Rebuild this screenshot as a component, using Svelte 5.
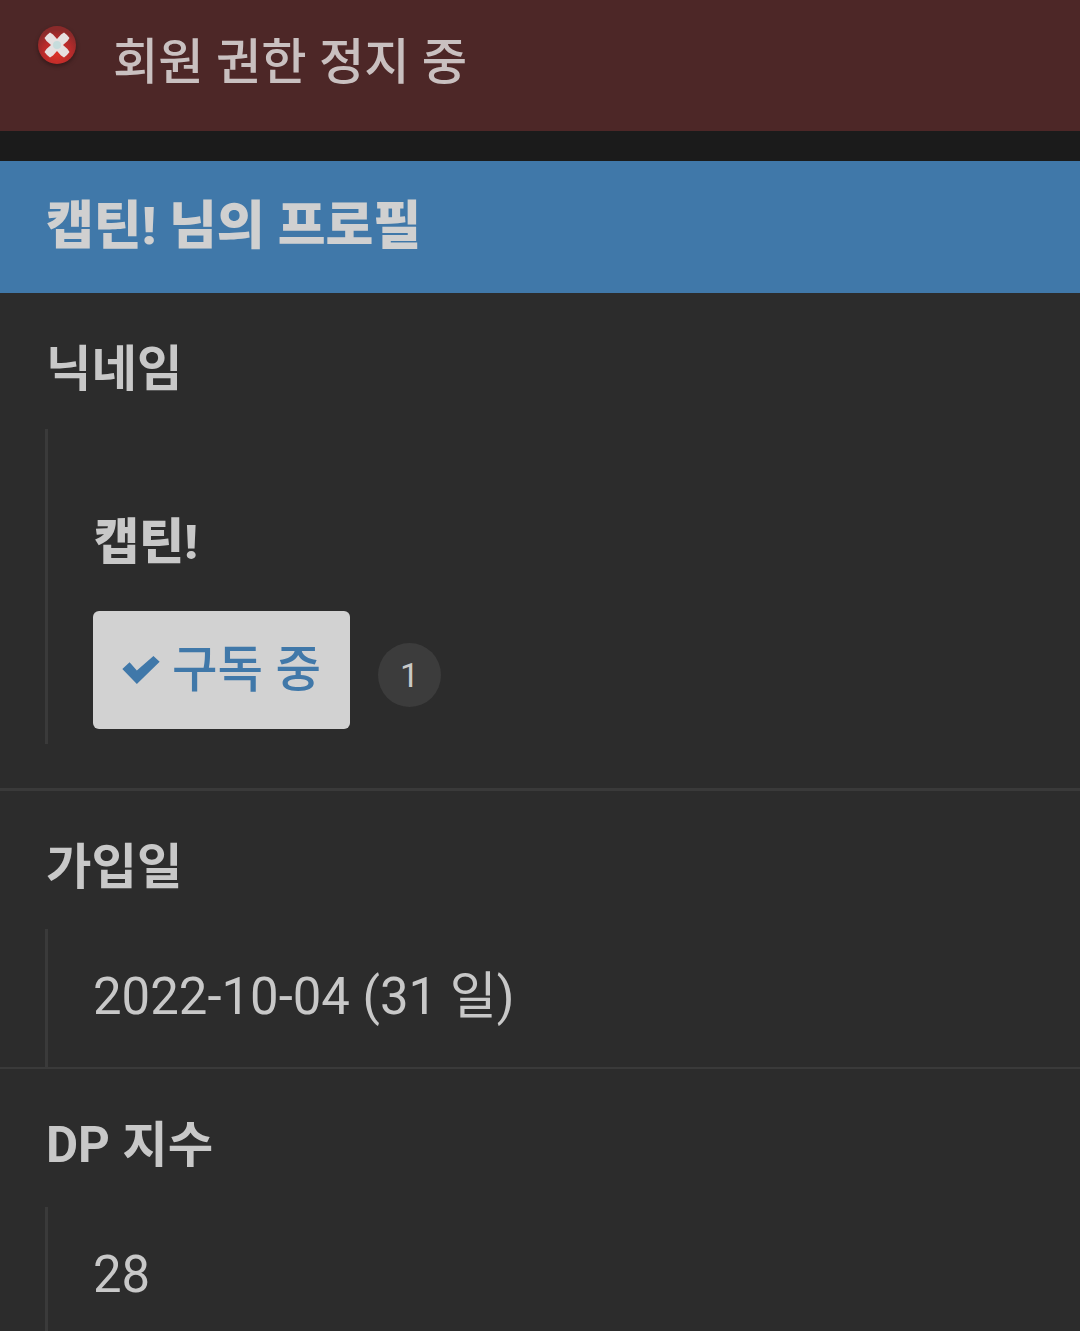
<script>
  const sections = [
    { title: '가입일', value: '2022-10-04 (31 일)' },
    { title: 'DP 지수', value: '28' }
  ];
</script>

<div class="page">
  <div class="banner">
    <svg class="err" viewBox="0 0 40 40" width="40" height="40" aria-hidden="true">
      <defs>
        <radialGradient id="ball" cx="50%" cy="72%" r="62%">
          <stop offset="0%" stop-color="#dc3228" />
          <stop offset="60%" stop-color="#b82b2b" />
          <stop offset="100%" stop-color="#8a2a2a" />
        </radialGradient>
      </defs>
      <circle cx="20" cy="20" r="19" fill="url(#ball)" />
      <path d="M7.5 13 L10 10 L13 7.5 L16 9.5 L20 14 L24 9.5 L27 7.5 L30 10 L32.5 13 L30.5 16 L26 20 L30.5 24 L32.5 27 L30 30 L27 32.5 L24 30.5 L20 26 L16 30.5 L13 32.5 L10 30 L7.5 27 L9.5 24 L14 20 L9.5 16 Z" fill="#e6e0e0" />
      <circle cx="20" cy="20" r="4" fill="#c6dcdc" />
    </svg>
    <span class="banner-text">회원 권한 정지 중</span>
  </div>
  <div class="gap"></div>
  <h1 class="head">캡틴! 님의 프로필</h1>

  <section class="sec first">
    <h2>닉네임</h2>
    <div class="val nick">
      <div class="name">캡틴!</div>
      <div class="row">
        <span class="btn">
          <svg class="check" viewBox="0 0 36 27" width="38" height="28" aria-hidden="true">
            <path d="M0 12.5 L7 6 L14 14 L30 0 L36 5.5 L14 27 Z" fill="#4078a9" />
          </svg>
          구독 중
        </span>
        <span class="badge">1</span>
      </div>
    </div>
  </section>

  {#each sections as s, i}
    <section class="sec" class:last={i === sections.length - 1}>
      <h2>{s.title}</h2>
      <div class="val">{s.value}</div>
    </section>
  {/each}
</div>

<style>
  :global(body) {
    margin: 0;
    background: #2c2c2c;
  }
  .page {
    height: 1331px;
    overflow: hidden;
    background: #2c2c2c;
    color: #c8c8c8;
    font-family: Roboto, "Noto Sans CJK KR", sans-serif;
    font-size: 48px;
  }
  .banner {
    height: 131px;
    background: #4d2727;
    display: flex;
    align-items: flex-start;
    box-sizing: border-box;
    padding: 25px 0 0 37px;
  }
  .err {
    flex: none;
    filter: blur(0.7px) drop-shadow(0 2px 2px rgba(0, 0, 0, 0.35));
  }
  .banner-text {
    margin: 2px 0 0 36px;
    line-height: 70px;
    color: #c9c0c0;
    font-size: 49.3px;
    font-weight: 500;
  }
  .gap {
    height: 30px;
    background: #1b1b1b;
  }
  .head {
    margin: 0;
    height: 132px;
    background: #4078a9;
    color: #d0d0d0;
    font-size: 52px;
    font-weight: 900;
    line-height: 132px;
    padding-left: 46px;
  }
  .sec {
    border-bottom: 2px solid #3a3a3a;
  }
  .sec.first {
    height: 498px;
    box-sizing: border-box;
    border-bottom-width: 3px;
  }
  .sec.last {
    border-bottom: 0;
  }
  h2 {
    margin: 0;
    padding: 44px 0 30px 46px;
    font-size: 49.4px;
    line-height: 64px;
    font-weight: 700;
    color: #c8c8c8;
  }
  .first h2 {
    padding-bottom: 28px;
  }
  .val {
    margin-left: 45px;
    border-left: 3px solid #3a3a3a;
    padding-left: 45px;
    height: 138px;
    line-height: 136px;
    font-size: 50.9px;
    color: #c8c8c8;
  }
  .val.nick {
    height: 315px;
    line-height: normal;
    display: flex;
    flex-direction: column;
    padding-top: 82px;
    box-sizing: border-box;
  }
  .name {
    font-size: 49px;
    font-weight: 900;
    line-height: 64px;
    margin-left: 1px;
  }
  .row {
    display: flex;
    align-items: center;
    margin-top: 36px;
  }
  .btn {
    width: 257px;
    height: 118px;
    box-sizing: border-box;
    background: #d2d2d2;
    border-radius: 6px;
    color: #4078a9;
    display: flex;
    align-items: center;
    gap: 12px;
    padding: 0 0 10px 29px;
    font-size: 49.5px;
    font-weight: 500;
    white-space: nowrap;
  }
  .check {
    flex: none;
    margin-top: 10px;
  }
  .badge {
    width: 63px;
    height: 64px;
    border-radius: 50%;
    background: #3c3c3c;
    color: #c8c8c8;
    font-size: 34px;
    display: flex;
    align-items: center;
    justify-content: center;
    margin-left: 28px;
    margin-top: 10px;
  }
</style>
